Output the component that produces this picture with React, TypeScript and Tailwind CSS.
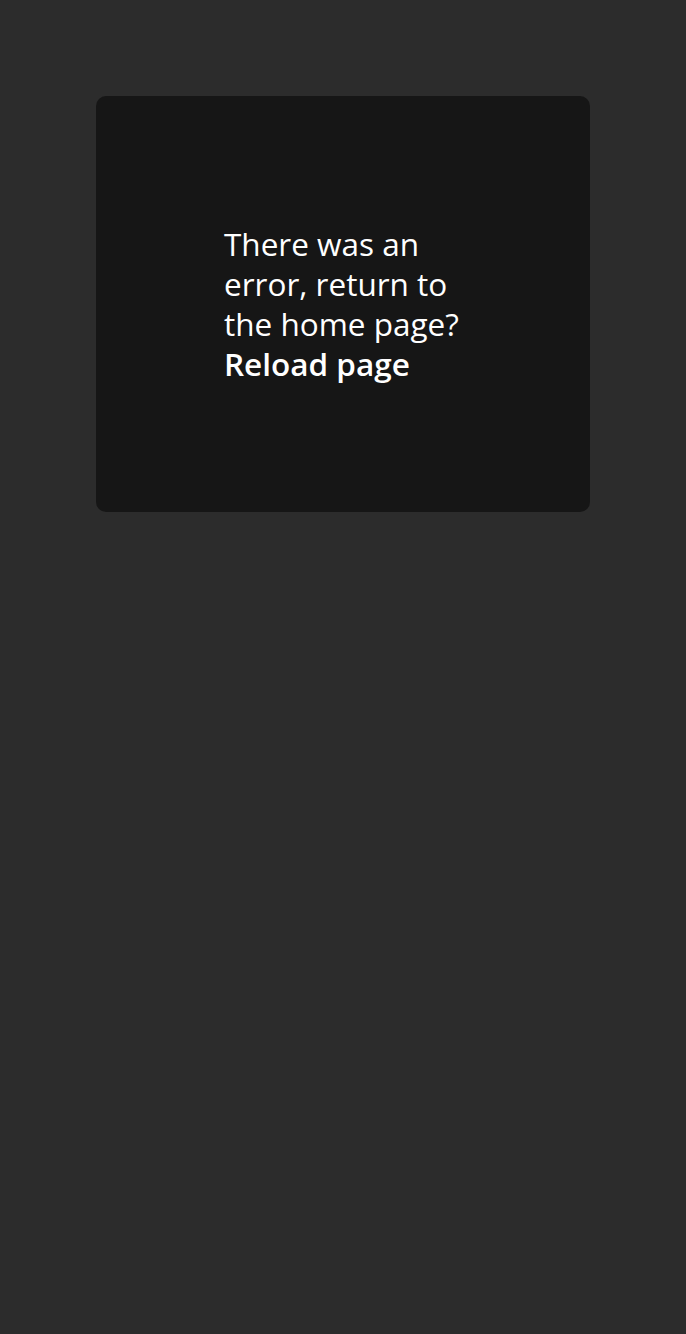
export default function App() {
  return (
    <div className="min-h-screen bg-[#2c2c2c] p-24 font-['Open_Sans','Noto_Sans',sans-serif]">
      <div className="rounded-[10px] bg-[#161616] p-32 text-[31.5px] leading-[40px] text-white">
        <p>There was an error, return to the home page?</p>
        <button className="block font-semibold">Reload page</button>
      </div>
    </div>
  );
}
